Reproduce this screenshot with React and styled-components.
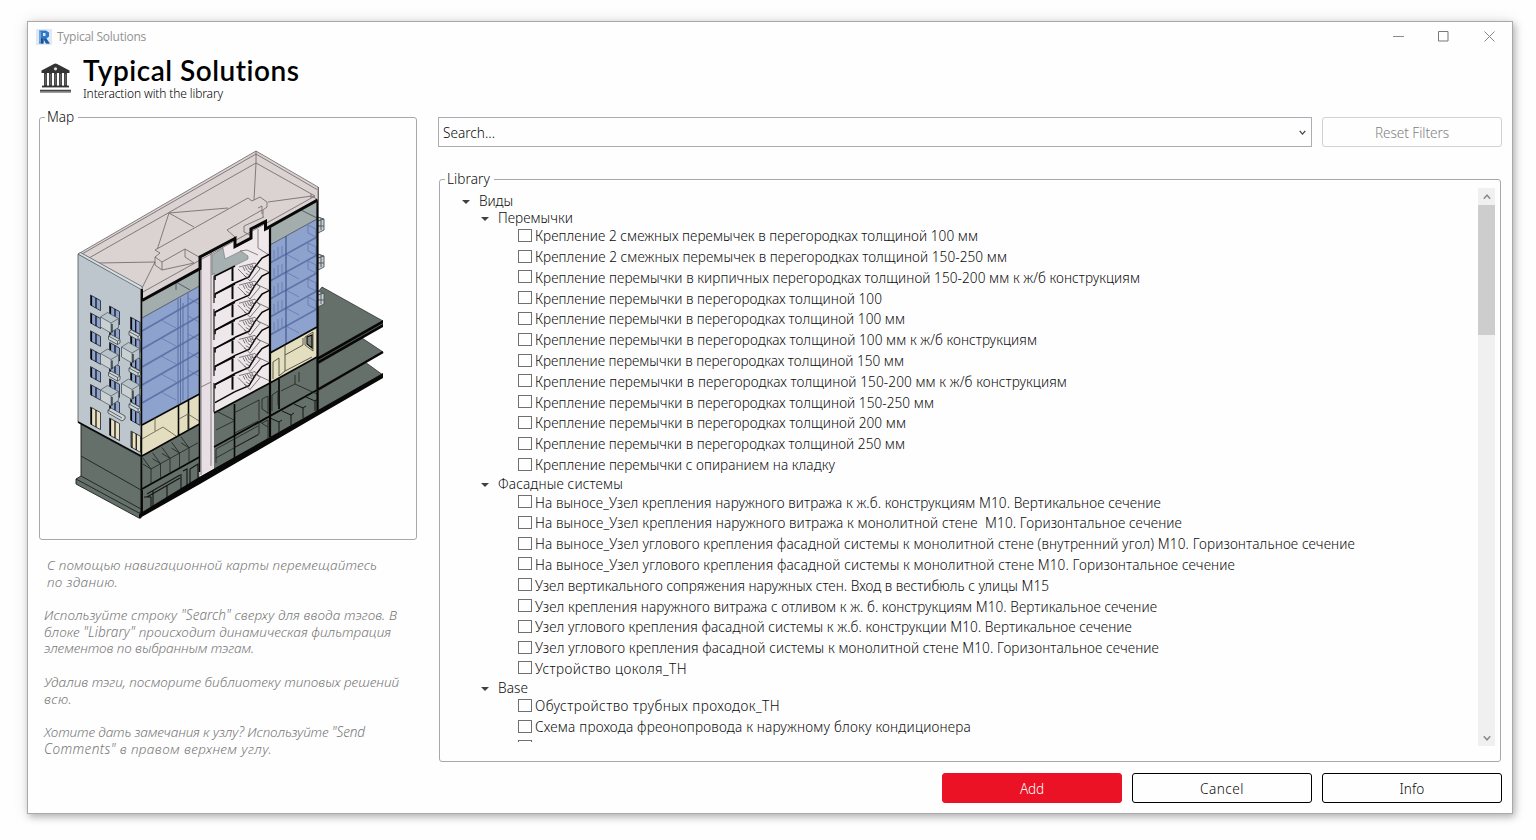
import React, { useLayoutEffect, useRef, useState } from "react";
import styled, { createGlobalStyle } from "styled-components";

const GlobalStyle = createGlobalStyle`
  *, *::before, *::after { box-sizing: border-box; }
  html, body { margin: 0; height: 840px; overflow: hidden; background: #fefefe; }
  body { font-family: "Noto Sans", "Open Sans", sans-serif; font-size: 13.6px; font-weight: 350; color: #0c0c0c; }
`;

const Desktop = styled.div`
  height: 840px;
  padding: 21px 0 0 27px;
`;
const Window = styled.main`
  display: flex;
  flex-direction: column;
  width: 1486px;
  height: 793px;
  border: 1px solid #a9a9ab;
  background: #fefefe;
  box-shadow: 2px 3px 7px rgba(0, 0, 0, 0.26), 0 0 14px rgba(0, 0, 0, 0.1);
`;
const TitleBar = styled.div`
  display: flex;
  align-items: center;
  height: 29px;
  padding-left: 8px;
  color: #929292;
  font-family: "Open Sans", sans-serif;
  font-size: 12px;
  font-weight: 400;
`;
const Caption = styled.div`
  flex: 1;
  padding-left: 5px;
`;
const WindowControl = styled.div`
  display: flex;
  justify-content: center;
  width: 45.5px;
`;
const Header = styled.header`
  display: flex;
  height: 66px;
  padding: 0 0 0 11px;
`;
const HeaderIcon = styled.svg`
  width: 33px;
  height: 32px;
  margin-top: 12px;
`;
const Heading = styled.div`
  padding-left: 11px;
`;
const Title = styled.h1`
  margin: 0;
  height: 34px;
  font: 600 28px/38px Lato, sans-serif;
  color: #000;
`;
const Subtitle = styled.div`
  font-size: 12px;
  line-height: 16px;
  color: #000;
  padding-top: 1px;
`;
const Body = styled.div`
  display: flex;
  flex: 1;
  padding-left: 11px;
`;
const Side = styled.aside`
  width: 378px;
`;
const Main = styled.section`
  width: 1064px;
  margin-left: 21px;
`;
const GroupBox = styled.section`
  width: ${(p) => p.$w}px;
  height: ${(p) => p.$h}px;
  margin: ${(p) => p.$margin || 0};
  border: 1px solid #a8a8aa;
  border-radius: 3px;
`;
const Legend = styled.div`
  width: fit-content;
  height: 19px;
  margin: -11px 0 0 5px;
  padding: 0 4px 0 2px;
  background: #fefefe;
  line-height: 19px;
`;
const MapDrawing = styled.svg`
  display: block;
  width: 320px;
  height: 380px;
  margin: 20px 0 0 30px;
`;
const Hints = styled.div`
  padding: 17px 0 0 5px;
  color: #787878;
  font-style: italic;
`;
const Hint = styled.p`
  margin: 0 0 16.7px;
  padding-left: ${(p) => (p.$indent ? 3 : 0)}px;
  line-height: 16.8px;
`;
const Line = styled.div`
  height: 16.7px;
  white-space: nowrap;
`;
const FilterBar = styled.div`
  display: flex;
  gap: 10px;
`;
const SearchBox = styled.div`
  display: flex;
  align-items: center;
  justify-content: space-between;
  width: 874px;
  height: 30px;
  padding: 0 5px 0 4px;
  border: 1px solid #abadb3;
`;
const Button = styled.button`
  width: 180px;
  height: 30px;
  padding: 0;
  border: 1px solid ${(p) => (p.$kind === "primary" ? "#ea1224" : p.$kind === "disabled" ? "#cfd2d6" : "#000")};
  border-radius: 3px;
  background: ${(p) => (p.$kind === "primary" ? "#ea1224" : "#fefefe")};
  color: ${(p) => (p.$kind === "primary" ? "#fff" : p.$kind === "disabled" ? "#808080" : "#0c0c0c")};
  font: inherit;
`;
const Actions = styled.footer`
  display: flex;
  justify-content: flex-end;
  gap: 10px;
  padding-top: 11px;
`;
const LibraryArea = styled.div`
  display: flex;
  justify-content: space-between;
  height: 558px;
  padding-right: 5px;
`;
const Tree = styled.div`
  height: 554px;
  padding: 4px 0 0 21px;
  overflow: hidden;
`;
const Branch = styled.div`
  display: flex;
  align-items: center;
  gap: 9px;
  height: 16.7px;
  padding-left: ${(p) => p.$level * 19}px;
  white-space: nowrap;
`;
const Leaf = styled.label`
  display: flex;
  align-items: center;
  gap: 3px;
  height: 20.8px;
  padding-left: 57px;
  white-space: nowrap;
`;
const Check = styled.span`
  width: 14px;
  height: 13px;
  margin-top: -1px;
  border: 1px solid #707070;
  background: #fefefe;
`;
const Arrow = styled.span`
  width: 0;
  height: 0;
  margin: 3px 0 0 1px;
  border: 4px solid transparent;
  border-top-color: #404040;
  border-bottom: 0;
`;
const ScrollBar = styled.div`
  display: flex;
  flex-direction: column;
  justify-content: space-between;
  width: 17px;
  height: 558px;
  background: #f0f0f0;
`;
const ScrollArrow = styled.div`
  display: flex;
  align-items: center;
  justify-content: center;
  height: 17px;
`;
const Thumb = styled.div`
  height: 130px;
  margin-bottom: auto;
  background: #cdcdcd;
`;
const Fitted = styled.span`
  white-space: pre;
`;

/* Spreads its letters so that the run is exactly `width` pixels wide. */
function FitText({ width, children }) {
  const ref = useRef(null);
  const [spacing, setSpacing] = useState(0);
  useLayoutEffect(() => {
    const natural = ref.current.getBoundingClientRect().width;
    setSpacing((width - natural) / children.length);
  }, [width, children]);
  return (
    <Fitted ref={ref} style={{ letterSpacing: spacing }}>
      {children}
    </Fitted>
  );
}

const library = [
  {
    name: "Перемычки", width: 75,
    items: [
      ["Крепление 2 смежных перемычек в перегородках толщиной 100 мм", 443],
      ["Крепление 2 смежных перемычек в перегородках толщиной 150-250 мм", 472],
      ["Крепление перемычки в кирпичных перегородках толщиной 150-200 мм к ж/б конструкциям", 605],
      ["Крепление перемычки в перегородках толщиной 100", 347],
      ["Крепление перемычки в перегородках толщиной 100 мм", 370],
      ["Крепление перемычки в перегородках толщиной 100 мм к ж/б конструкциям", 502],
      ["Крепление перемычки в перегородках толщиной 150 мм", 369],
      ["Крепление перемычки в перегородках толщиной 150-200 мм к ж/б конструкциям", 532],
      ["Крепление перемычки в перегородках толщиной 150-250 мм", 399],
      ["Крепление перемычки в перегородках толщиной 200 мм", 371],
      ["Крепление перемычки в перегородках толщиной 250 мм", 370],
      ["Крепление перемычки с опиранием на кладку", 300],
    ],
  },
  {
    name: "Фасадные системы", width: 125,
    items: [
      ["На выносе_Узел крепления наружного витража к ж.б. конструкциям М10. Вертикальное сечение", 626],
      ["На выносе_Узел крепления наружного витража к монолитной стене  М10. Горизонтальное сечение", 647],
      ["На выносе_Узел углового крепления фасадной системы к монолитной стене (внутренний угол) М10. Горизонтальное сечение", 820],
      ["На выносе_Узел углового крепления фасадной системы к монолитной стене М10. Горизонтальное сечение", 700],
      ["Узел вертикального сопряжения наружных стен. Вход в вестибюль с улицы М15", 514],
      ["Узел крепления наружного витража с отливом к ж. б. конструкциям М10. Вертикальное сечение", 622],
      ["Узел углового крепления фасадной системы к ж.б. конструкции М10. Вертикальное сечение", 597],
      ["Узел углового крепления фасадной системы к монолитной стене М10. Горизонтальное сечение", 624],
      ["Устройство цоколя_ТН", 152],
    ],
  },
  {
    name: "Base", width: 30,
    items: [
      ["Обустройство трубных проходок_ТН", 245],
      ["Схема прохода фреонопровода к наружному блоку кондиционера", 436],
      ["", 0],
    ],
  },
];

const hints = [
  [["С помощью навигационной карты перемещайтесь", 330], ["по зданию.", 71]],
  [["Используйте строку \"Search\" сверху для ввода тэгов. В", 353], ["блоке \"Library\" происходит динамическая фильтрация", 347], ["элементов по выбранным тэгам.", 210]],
  [["Удалив тэги, посморите библиотеку типовых решений", 355], ["всю.", 28]],
  [["Хотите дать замечания к узлу? Используйте \"Send", 321], ["Comments\" в правом верхнем углу.", 228]],
];

const INK = "#080808";
const range = (n) => Array.from({ length: n }, (_, i) => i);

function FacadeWindow({ x, y, w = 10, h = 11, fill = "#8fa3d0" }) {
  const s = w * 0.56;
  return (
    <g>
      <path d={`M${x} ${y}l${w} ${s}v${h}l${-w} ${-s}z`} fill={fill} stroke="#1b2026" strokeWidth=".8" />
      <path d={`M${x + w * 0.55} ${y + s * 0.55}v${h}M${x + 1} ${y + 1}v${h}`} stroke={INK} strokeWidth="1.200" fill="none" />
    </g>
  );
}

/* A box balcony: long front panel, side panel and the gap behind them. */
function Balcony({ x, y }) {
  return (
    <g stroke="#4b5356" strokeWidth=".7">
      <path d={`M${x} ${y}l7 -4.500l11 6v9l-7 4.500l-11 -6z`} fill="#b8c3ca" />
      <path d={`M${x} ${y}l10.500 6v10l-10.500 -6z`} fill="#c9d1d5" />
      <path d={`M${x + 10.5} ${y + 6}l7.500 -4.500`} fill="none" />
      <path d={`M${x + 11.500} ${y + 7}v8.500`} stroke="#1b2026" strokeWidth="1.200" />
    </g>
  );
}

function Ledge({ x, y }) {
  return <path d={`M${x} ${y}l2.500 -1.500l9 5v3.500l-2.500 1.500l-9 -5zl9 5v3.500m0 -3.500l2.500 -1.500`} fill="#ccd5d8" stroke="#41484b" strokeWidth=".8" />;
}

function Facade() {
  return (
    <g>
      <path d="M78 254L141 289V457L78 422Z" fill="#bcc6cc" stroke="#4c5356" strokeWidth=".8" />
      <path d="M78 254L80.5 252.5L142 286.500V290Z" fill="#d5dde0" stroke="#5a6265" strokeWidth=".7" />
      {range(6).map((i) => <FacadeWindow key={i} x={90.5} y={295 + i * 17.9} h={10} />)}
      <FacadeWindow x={90.500} y={407} h={17} fill="#e8e1c2" />
      {range(6).map((i) => <FacadeWindow key={i} x={109.500} y={306 + i * 18.2} h={13} />)}
      <FacadeWindow x={109.500} y={418} h={17} fill="#e8e1c2" />
      {range(6).map((i) => <FacadeWindow key={i} x={130.500} y={317 + i * 18.2} w={9.500} h={12} />)}
      <FacadeWindow x={131} y={431} w={9.500} h={16} fill="#e8e1c2" />
      {[317, 353.5, 390].map((y) => <Balcony key={y} x={100.500} y={y} />)}
      {[347, 383.500].map((y) => <Balcony key={y} x={121.500} y={y} />)}
      {[336, 372.500].map((y) => <Ledge key={y} x={108.500} y={y} />)}
      {[331.500, 368, 404].map((y) => <Ledge key={y} x={129} y={y} />)}
      <path d="M108 410l3-2l14 8v3l-3 2l-14-8zl14 8" fill="#ccd5d8" stroke="#3c4244" strokeWidth=".8" />
    </g>
  );
}

function Roof() {
  return (
    <g fill="none" stroke="#6a6365" strokeWidth=".8">
      <path d="M78 254L256 151L318 187V201L266 230V222L251 230V239L235 247V239L200 258V268L142 301V288Z" fill="#dbd2d2" />
      <path d="M82 254L256 154L317 189.500M89 258L256 163L315 196L142 292.500M256 151V163M80 252.500L142 287" />
      <path d="M98 263L155 262L142 288M157 250L169 213L228 208M169 213L194 227M254 200L256 163M268 202L312 196L318 200M311 194V198" />
      <path d="M155 250L248 198L252 201L260 197L267 202V207L263 210V217L227 230L235 237L263 222V217L199 252L185 249L162 262L155 257L160 253Z" fill="#dbd2d2" stroke="none" />
      <path d="M155 250L248 198L252 201L260 197L267 202V207L263 210V217M227 230L235 237M155 250L160 253L155 257L162 262L185 249L199 257M155 257V265L162 270V262M185 249V257L194 263M162 270L194 263M227 230L262 210M244 226V232L250 235M244 226L264 217M258 208L262 206L262 214" fill="none" />
      <path d="M142 300.500L200 268.500V257L235 238.500V246.500L251 238V229L265.500 221.500V229L317.500 200" stroke={INK} strokeWidth="3" />
      <path d="M142 300V289" stroke={INK} strokeWidth="2" />
    </g>
  );
}

function LeftRooms() {
  return (
    <g fill="none">
      <path d="M142 301L199.500 269V286L142 318Z" fill="#a3adab" />
      <path d="M142 318L199.500 286V394L142 425Z" fill="#8ea2ce" />
      <path d="M142 425L199.500 394V424L142 456Z" fill="#e3dec0" />
      <path d="M142 456L199.500 424V478L142 514Z" fill="#66706b" />
      <path d="M142 318L199.500 286M176 282L190 290M176 282V290" stroke="#3d4759" strokeWidth=".8" />
      {range(5).map((i) => (
        <g key={i} stroke="#5f74a8">
          <path d={`M142 ${331 + i * 18}L199.500 ${298 + i * 18}`} strokeWidth="1.800" />
          <path d={`M161 ${320 + i * 18}L176 ${328 + i * 18}M188 ${298 + i * 18}L199 ${304 + i * 18}`} strokeWidth=".7" />
        </g>
      ))}
      <path d="M178 299V404M180.500 298V403M183 303V400M188 293V399" stroke="#566b9e" strokeWidth=".9" />
      <path d="M142 425L199.500 394M142 456L199.500 424M178.500 405V435M188.500 399V430" stroke={INK} strokeWidth="1.600" />
      <path d="M142 439L163 427L176 436M155 418V431M179 419L188 414V430M188 414L199 421" stroke="#5c5949" strokeWidth=".8" />
      <path d="M142 489L199.500 457M142 490V515" stroke={INK} strokeWidth="1.800" />
      {range(5).map((i) => {
        const x = 143 + i * 9.500, y = 464 - i * 5.300;
        return <path key={i} d={`M${x} ${y - 6}L${x + 8} ${y + 5}V${y + 19}M${x + 8} ${y + 5}L${x + 17} ${y}M${x} ${y}L${x + 8} ${y + 5}`} stroke="#1c2220" strokeWidth=".8" />;
      })}
      <path d="M147 494L180 475M147 497L180 478M144 497H151V509M153 491V507M167 485V501M181 474V491M183 471L187 469V488M190 469L198 464V478M190 469V483M151 509L199 480" stroke="#111615" strokeWidth="1.100" />
    </g>
  );
}

function StairCore() {
  return (
    <g fill="none">
      <path d="M201 258L235 239V247L251 239V230L265 222V229L270 227V383L214 413V466L200 475Z" fill="#eee8eb" />
      <path d="M201 258L214 252V468L201 475Z" fill="#e7dfe3" />
      <path d="M212 255L223 248L225 259L241 251L248 256V259L214 276V273L212 275Z" fill="#a7b0b0" stroke="#6c7373" strokeWidth=".6" />
      <path d="M211 252V466M201 387L211 382M201 258V475M258 229V248L269 255M240 251L247 250L258 255" stroke="#6c6669" strokeWidth=".8" />
      {range(7).map((i) => {
        const y = 276 + i * 18.1;
        return (
          <g key={i}>
            <path d={`M215 ${y + 4}V${y}L235 ${y - 10}`} stroke={INK} strokeWidth="1.600" />
            <path d={`M235 ${y + 7}L249 ${y + 1}L255 ${y - 9}L262 ${y - 18}L270 ${y - 22}`} stroke={INK} strokeWidth="1.500" />
            <path d={`M215 ${y + 18}L235 ${y + 7}`} stroke={INK} strokeWidth="1.500" />
            <path d={`M232.500 ${y - 8}V${y + 5}`} stroke={INK} strokeWidth="2" />
            <path d={`M239 ${y - 9}L255 ${y - 13}L260 ${y - 7}L250 ${y + 5}L238 ${y - 7}M256 ${y - 10}L269 ${y - 4}`} stroke="#4f494c" strokeWidth=".7" />
            {range(5).map((k) => <path key={k} d={`M${243 + k * 2.200} ${y - 9 - k * .7}l2 4M${248 + k * 1.800} ${y + 2 - k * 2.300}l-4 -2.500`} stroke="#49454a" strokeWidth=".7" />)}
          </g>
        );
      })}
      <path d="M214 276V303M214 309V340M214 347V376M214 383V412" stroke="#201d1f" strokeWidth="1.200" />
    </g>
  );
}

function RightRooms() {
  return (
    <g fill="none">
      {[217, 254, 291].map((y) => (
        <path key={y} d={`M318 ${y}l6 2v11l-6 3M321 ${y + 1}v12M318 ${y + 4}l6-2M318 ${y + 9}h6`} fill="#c6cfd3" stroke="#4c5356" strokeWidth=".9" />
      ))}
      <path d="M270 227L317 201V219L270 245Z" fill="#a3adab" />
      <path d="M270 245L317 219V327L270 353Z" fill="#8ea2ce" />
      <path d="M270 353L317 327V357L270 383Z" fill="#e3dec0" />
      <path d="M214 413L317 357V412L214 470Z" fill="#66706b" />
      <path d="M270 245L317 219M301 210L317 218" stroke="#3d4759" strokeWidth=".8" />
      {range(5).map((i) => (
        <g key={i} stroke="#5f74a8">
          <path d={`M270 ${263 + i * 18}L317 ${237 + i * 18}`} strokeWidth="1.600" />
          <path d={`M286 ${254 + i * 18}L299 ${261 + i * 18}M274 ${250 + i * 18}v9M278 ${247 + i * 18}v11M282 ${246 + i * 18}v10M308 ${225 + i * 18}l8 4v8l-8-4z`} strokeWidth=".7" />
        </g>
      ))}
      <path d="M286 236V344" stroke="#445990" strokeWidth="1.200" />
      <path d="M270 353L317 327M270 383L317 357M214 413L270 383M214 447L317 390" stroke={INK} strokeWidth="1.800" />
      <path d="M285 345V371L312 357M285 355L303 345V338M273 362L279 358V376M273 362V379M285 371L279 376M305 337L313 332V351L305 345V337" stroke="#4d493d" strokeWidth=".9" />
      <path d="M307 337L312 335V348L307 344Z" fill="#7c8580" stroke={INK} strokeWidth="1.200" />
      <path d="M234.500 404V458M279 379V409" stroke={INK} strokeWidth="1.600" />
      <path d="M216 411L234 420M216 430L234 421M216 449L258 426M234 413L259 400V420M262 399L268 396V414M262 399V409L268 413M235 433L258 421L268 427M216 458L259 434V423M262 423L268 420V439M235 447L258 435M272 395L278 391V405M272 395V411M295 375V384L317 394M295 384L281 391M299 372V382M216 449V463" stroke="#1c2220" strokeWidth=".8" />
      {range(4).map((i) => {
        const x = 270 + i * 12, y = 421 - i * 7;
        return <path key={i} d={`M${x} ${y - 3}L${x + 9} ${y + 1}V${y + 11}M${x + 9} ${y + 1}L${x + 12} ${y - 1}`} stroke="#111615" strokeWidth="1" />;
      })}
      <path d="M270 226V437M317.500 187V414" stroke={INK} strokeWidth="2.200" />
    </g>
  );
}

function BuildingMap() {
  return (
    <MapDrawing viewBox="70 146 320 380">
      <path d="M318 358V292L322 287L383 321L318 358Z" fill="#66706b" stroke="#202624" strokeWidth=".7" />
      <path d="M318 364L362 338L383 352L318 390Z" fill="#66706b" stroke="#202624" strokeWidth=".7" />
      <path d="M318 391L365 362L383 375L318 412Z" fill="#66706b" stroke="#202624" strokeWidth=".7" />
      <path d="M318 357L383 320V327L318 364Z" fill={INK} />
      <path d="M318 360.500L383 323.500" stroke="#66706b" strokeWidth=".8" />
      <path d="M318 389.500L383 352" stroke={INK} strokeWidth="2.400" />
      <path d="M81 424L141 457V518L139 518L76 484V479L81 476Z" fill="#66706b" stroke="#1b201e" strokeWidth=".9" />
      <path d="M81 456L141 490M76 479L139 513L142 511M81 476L141 509" fill="none" stroke="#1b201e" strokeWidth=".9" />
      <LeftRooms />
      <StairCore />
      <RightRooms />
      <Roof />
      <Facade />
      <path d="M199.500 268V472" stroke={INK} strokeWidth="1.600" />
      <path d="M141.500 289V515M141 456L78 422" fill="none" stroke={INK} strokeWidth="1.500" />
      <path d="M139 514L200 476.500L318 410L383 373V378L318 415.500L200 484L139 518.500Z" fill={INK} />
    </MapDrawing>
  );
}

function Chevron({ up, size = 8, color = "#8a8a8a" }) {
  return (
    <svg width={size} height={size} viewBox="0 0 8 8">
      <path d={up ? "M.8 5.800L4 2.200L7.200 5.800" : "M.8 2.200L4 5.800L7.200 2.200"} fill="none" stroke={color} strokeWidth="1.500" />
    </svg>
  );
}

function RevitIcon() {
  return (
    <svg width="16" height="16" viewBox="0 0 16 16">
      <rect width="16" height="16" fill="#dfe9f5" />
      <path d="M3 1.500h7l3 2v4l-2.500 2l3.500 5h-4l-2.500-4.500v4.500H3z" fill="#2f7ac6" />
      <path d="M3 1.500l2 1.500v10.500H3z" fill="#6fa5dc" />
      <path d="M7 4h2.500v3H7z" fill="#dfe9f5" />
      <path d="M5 9l2.500 1v4.500H5z" fill="#1d4f8f" />
      <path d="M7.500 10l2.500-.500l3.500 5h-3.500z" fill="#1f5da6" />
    </svg>
  );
}

export default function App() {
  return (
    <Desktop>
      <GlobalStyle />
      <Window>
        <TitleBar>
          <RevitIcon />
          <Caption><FitText width={89}>Typical Solutions</FitText></Caption>
          <WindowControl><svg width="11" height="11"><path d="M0 5.500H11" stroke="#8a8a94" /></svg></WindowControl>
          <WindowControl><svg width="11" height="11"><path d="M.5 .5h9.500v9.500h-9.500z" fill="none" stroke="#77777f" /></svg></WindowControl>
          <WindowControl><svg width="11" height="11"><path d="M.5 .5l10 10M10.500 .5l-10 10" stroke="#85858d" /></svg></WindowControl>
        </TitleBar>
        <Header>
          <HeaderIcon viewBox="0 0 33 32">
            <path d="M16.500 .5Q18 .5 20 2L30.500 7.500V10H2.500V7.500L13 2Q15 .5 16.500 .5Z" fill="#333" />
            <circle cx="16.500" cy="5.800" r="1.600" fill="#ddd" />
            <path d="M6.500 10V23M11.500 10V23M16.500 10V23M21.500 10V23M26.500 10V23" stroke="#333" strokeWidth="2.800" />
            <path d="M6.500 11V22M11.500 11V22M16.500 11V22M21.500 11V22M26.500 11V22" stroke="#777" strokeWidth=".7" />
            <path d="M3 23.500H30" stroke="#333" strokeWidth="1.800" />
            <path d="M1 28.300H32" stroke="#888" strokeWidth="3" />
            <path d="M1 27.500H32" stroke="#444" strokeWidth="1.300" />
          </HeaderIcon>
          <Heading>
            <Title><FitText width={217}>Typical Solutions</FitText></Title>
            <Subtitle><FitText width={140}>Interaction with the library</FitText></Subtitle>
          </Heading>
        </Header>
        <Body>
          <Side>
            <GroupBox $w={378} $h={423}>
              <Legend><FitText width={27}>Map</FitText></Legend>
              <BuildingMap />
            </GroupBox>
            <Hints>
              {hints.map((lines, i) => (
                <Hint key={i} $indent={i === 0}>
                  {lines.map(([text, width]) => (
                    <Line key={text}><FitText width={width}>{text}</FitText></Line>
                  ))}
                </Hint>
              ))}
            </Hints>
          </Side>
          <Main>
            <FilterBar>
              <SearchBox><FitText width={52}>Search...</FitText><Chevron size={7} color="#444" /></SearchBox>
              <Button $kind="disabled"><FitText width={74}>Reset Filters</FitText></Button>
            </FilterBar>
            <GroupBox $w={1062} $h={583} $margin="32px 0 0 1px">
              <Legend><FitText width={43}>Library</FitText></Legend>
              <LibraryArea>
                <Tree>
                  <Branch $level={0}><Arrow /><FitText width={34}>Виды</FitText></Branch>
                  {library.map((group) => (
                    <React.Fragment key={group.name}>
                      <Branch $level={1}><Arrow /><FitText width={group.width}>{group.name}</FitText></Branch>
                      {group.items.map(([text, width]) => (
                        <Leaf key={text}>
                          <Check />
                          {text && <FitText width={width}>{text}</FitText>}
                        </Leaf>
                      ))}
                    </React.Fragment>
                  ))}
                </Tree>
                <ScrollBar>
                  <ScrollArrow><Chevron up /></ScrollArrow>
                  <Thumb />
                  <ScrollArrow><Chevron /></ScrollArrow>
                </ScrollBar>
              </LibraryArea>
            </GroupBox>
            <Actions>
              <Button $kind="primary"><FitText width={24}>Add</FitText></Button>
              <Button><FitText width={44}>Cancel</FitText></Button>
              <Button><FitText width={25}>Info</FitText></Button>
            </Actions>
          </Main>
        </Body>
      </Window>
    </Desktop>
  );
}
